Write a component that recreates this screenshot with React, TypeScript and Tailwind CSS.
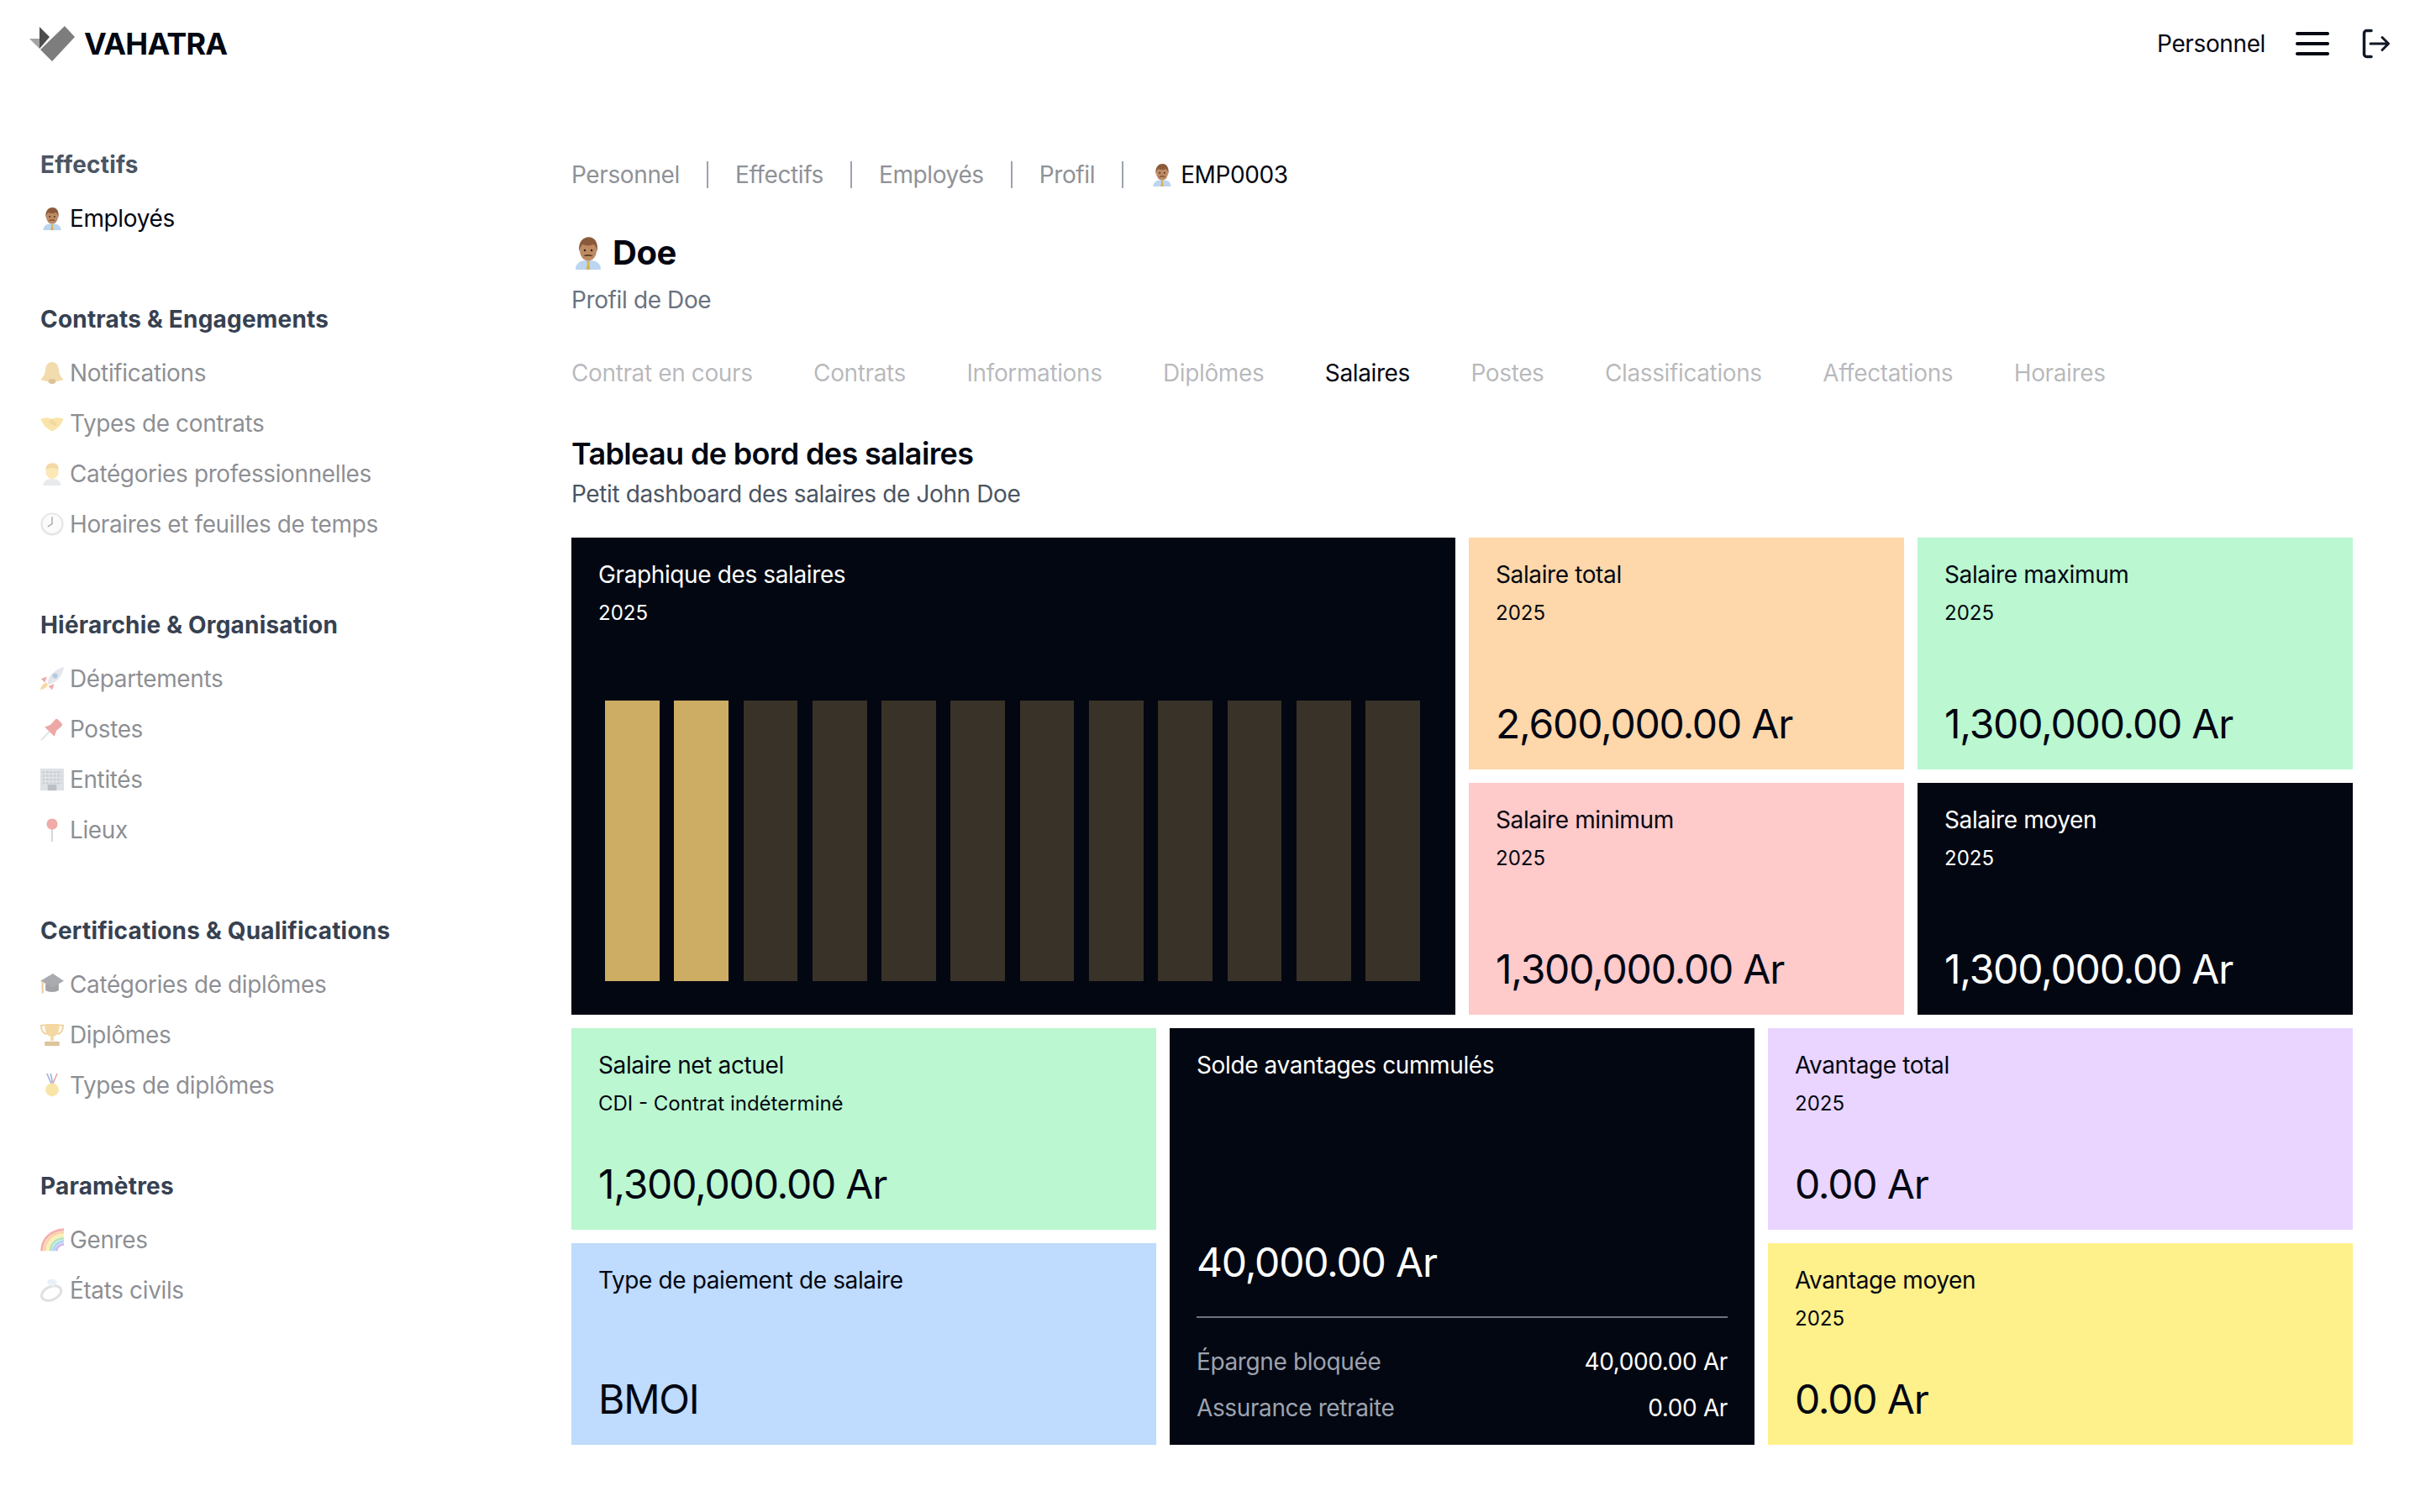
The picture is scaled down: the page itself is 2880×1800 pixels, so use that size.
import type { ReactNode } from "react";

// Emoji are drawn by hand: the sandbox has no colour emoji font.
function Man({ className = "w-7 h-7" }: { className?: string }) {
  return (
    <svg viewBox="0 0 32 32" className={className}>
      <path d="M4 32c0-6 4-9 12-9s12 3 12 9z" fill="#bcd5f0" />
      <path d="M14.500 24h3l-.6 2 1 6h-3.800l1-6z" fill="#d8b24a" />
      <ellipse cx="16" cy="14" rx="8" ry="9.500" fill="#bd8a62" />
      <path d="M7.500 15C6 6 11 1 16.500 1S26 6 24.500 15c-.6-3-1.500-6-3.500-7-3 1.500-7 1.500-10 0-2 1-2.900 4-3.500 7z" fill="#8b5a3a" />
      <circle cx="12.800" cy="13.500" r="1" fill="#33211a" />
      <circle cx="19.200" cy="13.500" r="1" fill="#33211a" />
      <path d="M11.500 19c2-1.800 7-1.800 9 0-2 .5-3.500 0-4.500-.3-1 .3-2.500.8-4.500.3z" fill="#5a3826" />
    </svg>
  );
}

function Bell() {
  return (
    <svg viewBox="0 0 32 32" className="h-7 w-7">
      <path d="M16 1c-5.500 0-8.500 4-9 10-.5 7-3 10-6.500 14 9 3.500 22 3.500 31 0-3.500-4-6-7-6.500-14-.5-6-3.500-10-9-10z" fill="#e4b04a" />
      <ellipse cx="16" cy="27.500" rx="5" ry="3.500" fill="#b07a20" />
    </svg>
  );
}

function Handshake() {
  return (
    <svg viewBox="0 0 32 32" className="h-7 w-7">
      <path d="M0 10l9-2 7 2 7-2 9 2-6 10-8 6c-2 1-3 1-5-1l-7-5z" fill="#f5c542" />
      <path d="M11 14l5-4 7 7-3 3z" fill="#e0a92e" />
    </svg>
  );
}

function Worker() {
  return (
    <svg viewBox="0 0 32 32" className="h-7 w-7">
      <path d="M4 32c0-6 4-9 12-9s12 3 12 9z" fill="#cfd2d8" />
      <ellipse cx="16" cy="14" rx="8.500" ry="9" fill="#f7cd5d" />
      <path d="M7.500 12C6.500 5 11 1.500 17 1.500S25.500 6 24.500 12c-2-3-4-4-8.500-4s-6.500 1-8.500 4z" fill="#e8a93a" />
    </svg>
  );
}

function Clock() {
  return (
    <svg viewBox="0 0 32 32" className="h-7 w-7">
      <circle cx="16" cy="16" r="15.500" fill="#c4c7cc" />
      <circle cx="16" cy="15.500" r="13" fill="#f7f8fa" />
      <path d="M16 6v9.500l-6 4" stroke="#33363b" strokeWidth="1.500" fill="none" />
    </svg>
  );
}

function Rocket() {
  return (
    <svg viewBox="0 0 32 32" className="h-7 w-7">
      <path d="M10 24C9 14 18 4 32 0c-2 14-12 23-22 24z" fill="#c3c8d2" />
      <circle cx="20" cy="12" r="3.500" fill="#5a88c9" />
      <path d="M9 13l-8 3 5 5zM19 23l-3 8-5-5z" fill="#d9463e" />
      <path d="M8 21c-3 1-7 4-8 10 5-1 9-3 10-7z" fill="#f4a83a" />
    </svg>
  );
}

function Pushpin() {
  return (
    <svg viewBox="0 0 32 32" className="h-7 w-7">
      <path d="M1 31l12-12" stroke="#9a9ca1" strokeWidth="1.500" />
      <path d="M6 13l8-3 6-7a3 3 0 0 1 4 0l5 5a3 3 0 0 1 0 4l-7 6-3 8z" fill="#d9403a" />
    </svg>
  );
}

function Building() {
  return (
    <svg viewBox="0 0 32 32" className="h-7 w-7">
      <rect x="0" y="1" width="32" height="30" fill="#b8bec6" />
      <path d="M3 6h26M3 11h26M3 16h26M3 21h26" stroke="#7d8792" strokeWidth="2" strokeDasharray="3 2" />
      <rect x="10" y="23" width="12" height="8" fill="#6b7480" />
    </svg>
  );
}

function RoundPin() {
  return (
    <svg viewBox="0 0 32 32" className="h-7 w-7">
      <path d="M16 14v18" stroke="#9a9ca1" strokeWidth="2" />
      <circle cx="16" cy="8" r="7.500" fill="#e0443e" />
    </svg>
  );
}

function GradCap() {
  return (
    <svg viewBox="0 0 32 32" className="h-7 w-7">
      <path d="M7 15v9c4 3 14 3 18 0v-9z" fill="#33363b" />
      <path d="M17 1L0 11l17 9 15-9z" fill="#44474d" />
      <path d="M3 12v16" stroke="#e2893a" strokeWidth="2.500" />
    </svg>
  );
}

function Trophy() {
  return (
    <svg viewBox="0 0 32 32" className="h-7 w-7">
      <path d="M6 3H1c0 8 3 11 8 12M26 3h5c0 8-3 11-8 12" stroke="#d99a2b" strokeWidth="2" fill="none" />
      <path d="M6 1h20c0 11-3 16-8 17v6h-4v-6C9 17 6 12 6 1z" fill="#e8aa35" />
      <rect x="6" y="25" width="20" height="6" fill="#b87e22" />
    </svg>
  );
}

function Medal() {
  return (
    <svg viewBox="0 0 32 32" className="h-7 w-7">
      <path d="M9 0l6 14M14 0l3 14" stroke="#3f5fb5" strokeWidth="2" />
      <path d="M23 0l-6 14" stroke="#d9403a" strokeWidth="2" />
      <circle cx="16" cy="22" r="9" fill="#f4c63f" />
    </svg>
  );
}

function Rainbow() {
  return (
    <svg viewBox="0 0 32 32" className="h-7 w-7">
      <path d="M2 31C2 15 14 3 32 2" stroke="#e8504a" strokeWidth="3.500" fill="none" />
      <path d="M6 31C6 17 17 6 32 6" stroke="#f5a13a" strokeWidth="3.500" fill="none" />
      <path d="M10 31C10 19 19 10 32 10" stroke="#f7dc4a" strokeWidth="3.500" fill="none" />
      <path d="M14 31C14 21 22 14 32 14" stroke="#62c46a" strokeWidth="3.500" fill="none" />
      <path d="M18 31C18 24 24 18 32 18" stroke="#4aa5e8" strokeWidth="3.500" fill="none" />
      <path d="M22 31C22 26 26 22 32 22" stroke="#9a6ad9" strokeWidth="3.500" fill="none" />
    </svg>
  );
}

function Ring() {
  return (
    <svg viewBox="0 0 32 32" className="h-7 w-7">
      <ellipse cx="15" cy="20" rx="14" ry="9" transform="rotate(-25 15 20)" fill="none" stroke="#b9bcc2" strokeWidth="3.500" />
      <path d="M11 1h8l4 4-6 7-8-6z" fill="#cfe0ee" />
    </svg>
  );
}

const SECTIONS: { title: string; items: { icon: ReactNode; label: string; active?: boolean }[] }[] = [
  { title: "Effectifs", items: [{ icon: <Man />, label: "Employés", active: true }] },
  {
    title: "Contrats & Engagements",
    items: [
      { icon: <Bell />, label: "Notifications" },
      { icon: <Handshake />, label: "Types de contrats" },
      { icon: <Worker />, label: "Catégories professionnelles" },
      { icon: <Clock />, label: "Horaires et feuilles de temps" },
    ],
  },
  {
    title: "Hiérarchie & Organisation",
    items: [
      { icon: <Rocket />, label: "Départements" },
      { icon: <Pushpin />, label: "Postes" },
      { icon: <Building />, label: "Entités" },
      { icon: <RoundPin />, label: "Lieux" },
    ],
  },
  {
    title: "Certifications & Qualifications",
    items: [
      { icon: <GradCap />, label: "Catégories de diplômes" },
      { icon: <Trophy />, label: "Diplômes" },
      { icon: <Medal />, label: "Types de diplômes" },
    ],
  },
  {
    title: "Paramètres",
    items: [
      { icon: <Rainbow />, label: "Genres" },
      { icon: <Ring />, label: "États civils" },
    ],
  },
];

const CRUMBS = ["Personnel", "Effectifs", "Employés", "Profil"];
const TABS = ["Contrat en cours", "Contrats", "Informations", "Diplômes", "Salaires", "Postes", "Classifications", "Affectations", "Horaires"];
const BARS = [true, true, false, false, false, false, false, false, false, false, false, false];

function Card({
  title,
  sub,
  value,
  className,
}: {
  title: string;
  sub?: string;
  value: string;
  className: string;
}) {
  return (
    <div className={`flex flex-col px-8 pb-[22px] pt-6 ${className}`}>
      <div className="text-[28px] leading-10">{title}</div>
      {sub && <div className="mt-[10px] text-[24px] leading-8 tracking-normal">{sub}</div>}
      <div className="mt-auto text-[48px] leading-[64px] tracking-[-1.2px]">{value}</div>
    </div>
  );
}

export default function App() {
  return (
    <div className="min-h-[1800px] bg-white font-['Inter',sans-serif] tracking-[-0.38px] text-[#030712]">
      <header className="flex h-[104px] items-center justify-between pl-8 pr-8">
        <div className="flex items-center gap-[8px]">
          <svg viewBox="0 0 60 46" className="h-[46px] w-[60px]">
            <path d="M3 17h12v12z" fill="#a3a3a3" />
            <path d="M15 3l12 12-12 14z" fill="#4d4d4d" />
            <path d="M45 2l12 13-27 29-14-14z" fill="#7d7d7d" />
          </svg>
          <span className="text-[36px] font-bold leading-10 tracking-[-0.8px]">VAHATRA</span>
        </div>
        <div className="flex items-center gap-[36px]">
          <span className="text-[28px] leading-10">Personnel</span>
          <div className="flex h-7 w-10 flex-col justify-between">
            <div className="h-1 rounded-full bg-[#030712]" />
            <div className="h-1 rounded-full bg-[#030712]" />
            <div className="h-1 rounded-full bg-[#030712]" />
          </div>
          <svg viewBox="0 0 40 40" className="h-10 w-10" fill="none" stroke="#111827" strokeLinecap="round" strokeLinejoin="round">
            <path d="M14 4.500H8.500a3 3 0 0 0-3 3v25a3 3 0 0 0 3 3H14" strokeWidth="3.500" />
            <path d="M13 20h21M27 12.500l7.500 7.500-7.500 7.500" strokeWidth="3" />
          </svg>
        </div>
      </header>

      <div className="flex">
        <aside className="w-[680px] shrink-0 pl-12 pt-[72px]">
          {SECTIONS.map((section) => (
            <div key={section.title} className="mb-[70px]">
              <h3 className={`mb-[14px] text-[28px] font-bold leading-10 tracking-[0.2px] ${section.title === "Effectifs" ? "text-[#4b5563]" : "text-[#374151]"}`}>
                {section.title}
              </h3>
              {section.items.map((item) => (
                <div key={item.label} className={`flex h-[60px] items-center gap-[7px] text-[28px] ${item.active ? "" : "opacity-45"}`}>
                  {item.icon}
                  <span>{item.label}</span>
                </div>
              ))}
            </div>
          ))}
        </aside>

        <main className="w-[2120px] pt-[84px]">
          <nav className="flex h-10 items-center text-[28px]">
            {CRUMBS.map((crumb) => (
              <div key={crumb} className="flex items-center">
                <span className="text-[#8f9297]">{crumb}</span>
                <div className="mx-8 h-8 w-0.5 bg-[#9ca3af]" />
              </div>
            ))}
            <Man className="mr-2 h-7 w-7" />
            <span>EMP0003</span>
          </nav>

          <div className="mt-[43px] flex h-[60px] items-center gap-[9px]">
            <Man className="h-10 w-10" />
            <h1 className="text-[40px] font-bold tracking-[-0.5px]">Doe</h1>
          </div>
          <p className="mt-[6px] text-[28px] leading-10 text-[#6b7280]">Profil de Doe</p>

          <div className="mt-[47px] flex h-10 items-center gap-[72.500px] text-[28px]">
            {TABS.map((tab) => (
              <span key={tab} className={tab === "Salaires" ? "" : "text-[#030712]/30"}>
                {tab}
              </span>
            ))}
          </div>

          <h2 className="mt-[54px] text-[36px] font-semibold leading-[44px] tracking-[-0.65px]">Tableau de bord des salaires</h2>
          <p className="mt-[6px] text-[28px] leading-10 text-[#4b5563]">Petit dashboard des salaires de John Doe</p>

          <div className="mt-8 grid grid-cols-4 grid-rows-[276px_276px] gap-4">
            <div className="col-span-2 row-span-2 flex flex-col bg-[#030712] px-8 py-6 text-white">
              <div className="text-[28px] leading-10">Graphique des salaires</div>
              <div className="mt-[10px] text-[24px] leading-8 tracking-normal">2025</div>
              <div className="mb-4 mt-auto flex h-[334px] gap-[17.6px] pl-2 pr-2.5">
                {BARS.map((paid, i) => (
                  <div key={i} className={`flex-1 ${paid ? "bg-[#ccad63]" : "bg-[#393228]"}`} />
                ))}
              </div>
            </div>
            <Card title="Salaire total" sub="2025" value="2,600,000.00 Ar" className="bg-[#fed7aa]" />
            <Card title="Salaire maximum" sub="2025" value="1,300,000.00 Ar" className="bg-[#bbf7d0]" />
            <Card title="Salaire minimum" sub="2025" value="1,300,000.00 Ar" className="bg-[#fecaca]" />
            <Card title="Salaire moyen" sub="2025" value="1,300,000.00 Ar" className="bg-[#030712] text-white" />
          </div>

          <div className="mt-4 grid grid-cols-3 grid-rows-[240px_240px] gap-4">
            <Card title="Salaire net actuel" sub="CDI - Contrat indéterminé" value="1,300,000.00 Ar" className="bg-[#bbf7d0]" />
            <div className="row-span-2 flex flex-col bg-[#030712] px-8 py-6 text-white">
              <div className="text-[28px] leading-10">Solde avantages cummulés</div>
              <div className="mt-auto text-[48px] leading-[64px] tracking-[-1.2px]">40,000.00 Ar</div>
              <div className="mb-8 mt-8 h-0.5 bg-[#6b7280]" />
              <div className="flex h-10 items-center justify-between text-[28px]">
                <span className="text-[#9ca3af]">Épargne bloquée</span>
                <span>40,000.00 Ar</span>
              </div>
              <div className="mt-[15px] flex h-10 items-center justify-between text-[28px]">
                <span className="text-[#9ca3af]">Assurance retraite</span>
                <span>0.00 Ar</span>
              </div>
            </div>
            <Card title="Avantage total" sub="2025" value="0.00 Ar" className="bg-[#e9d5ff]" />
            <Card title="Type de paiement de salaire" value="BMOI" className="bg-[#bfdbfe]" />
            <Card title="Avantage moyen" sub="2025" value="0.00 Ar" className="bg-[#fef08a]" />
          </div>
        </main>
      </div>
    </div>
  );
}
